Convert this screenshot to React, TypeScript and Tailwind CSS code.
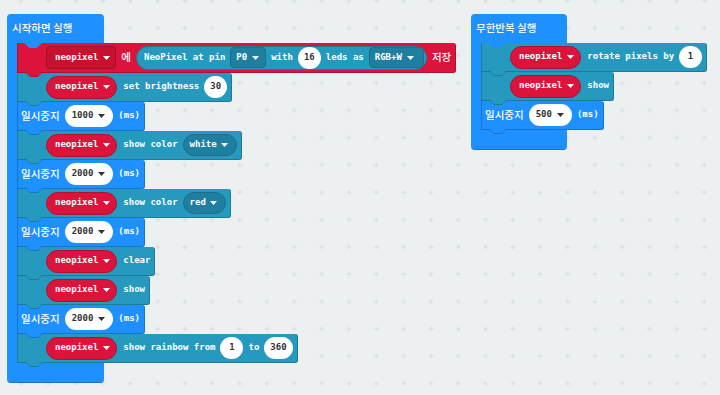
import type { ReactNode } from 'react'

type Kind = 'teal' | 'blue' | 'red'

const KIND: Record<Kind, { cls: string; fill: string; stroke: string }> = {
  teal: { cls: 'bg-[#2699bf] border-[#1e7a99]', fill: '#2699bf', stroke: '#1e7a99' },
  blue: { cls: 'bg-[#1e90ff] border-[#1873cc]', fill: '#1e90ff', stroke: '#1873cc' },
  red: { cls: 'bg-[#dc143c] border-[#b0102f]', fill: '#dc143c', stroke: '#b0102f' },
}

const ko = "font-['Noto_Sans_CJK_KR',sans-serif] text-[10.5px] font-medium leading-none"

function Tab({ fill, stroke, className = 'left-[7px]' }: { fill: string; stroke: string; className?: string }) {
  return (
    <svg
      className={`pointer-events-none absolute -bottom-[5px] z-10 ${className}`}
      width="18"
      height="6"
      viewBox="0 0 18 6"
    >
      <path d="M0 0 L5 5 L13 5 L18 0 Z" fill={fill} />
      <path d="M0 0.5 L5 5.5 L13 5.5 L18 0.5" fill="none" stroke={stroke} strokeWidth="1" />
    </svg>
  )
}

function Arrow({ color = '#fff' }: { color?: string }) {
  return (
    <svg width="7" height="4" viewBox="0 0 7 4" className="shrink-0">
      <path d="M0 0h7L3.5 4z" fill={color} />
    </svg>
  )
}

function Stmt({
  kind,
  children,
  pl = 'pl-[28px]',
  h = 'h-[29px]',
}: {
  kind: Kind
  children: ReactNode
  pl?: string
  h?: string
}) {
  const k = KIND[kind]
  return (
    <div
      className={`relative flex w-fit items-center gap-[5px] rounded-r-[3px] border border-t-0 pr-[4px] ${h} ${pl} ${k.cls}`}
    >
      {children}
      <Tab fill={k.fill} stroke={k.stroke} />
    </div>
  )
}

function VarOval() {
  return (
    <div className="flex h-[23px] items-center gap-[5px] rounded-full border border-[#b0102f] bg-[#dc143c] pr-[6px] pl-[8px]">
      <span>neopixel</span>
      <Arrow />
    </div>
  )
}

function Num({ v }: { v: string }) {
  return (
    <div className="flex h-[22px] min-w-[23px] items-center justify-center rounded-full bg-white px-[6px] text-[#333]">
      {v}
    </div>
  )
}

function WhiteDrop({ v }: { v: string }) {
  return (
    <div className="flex h-[22px] items-center gap-[5px] rounded-full bg-white pr-[8px] pl-[7px] text-[#333]">
      <span>{v}</span>
      <Arrow color="#333" />
    </div>
  )
}

function TealPill({ v }: { v: string }) {
  return (
    <div className="flex h-[22px] items-center gap-[4px] rounded-full border border-[#1a6f8c] bg-[#1f7fa0] pr-[8px] pl-[6px]">
      <span>{v}</span>
      <Arrow />
    </div>
  )
}

function TealRect({ v, pr = 'pr-[6px]' }: { v: string; pr?: string }) {
  return (
    <div className={`flex h-[21px] items-center gap-[5px] rounded-[4px] border border-[#1a6f8c] bg-[#1f7fa0] pl-[5px] ${pr}`}>
      <span>{v}</span>
      <Arrow />
    </div>
  )
}

function Pause({ v }: { v: string }) {
  return (
    <Stmt kind="blue" pl="pl-[3px]">
      <span className={ko}>일시중지</span>
      <WhiteDrop v={v} />
      <span>(ms)</span>
    </Stmt>
  )
}

function Neo({ children }: { children: ReactNode }) {
  return (
    <Stmt kind="teal">
      <VarOval />
      {children}
    </Stmt>
  )
}

function CBlock({ title, w, children }: { title: string; w: string; children: ReactNode }) {
  return (
    <div className="flex flex-col">
      <div className={`relative flex h-[29px] items-center rounded-t-[4px] bg-[#1e90ff] pl-[5px] ${w}`}>
        <span className={ko}>{title}</span>
        <Tab fill="#1e90ff" stroke="#1e90ff" className="left-[17px]" />
      </div>
      <div className="flex">
        <div className="w-[10px] shrink-0 bg-[#1e90ff]" />
        <div className="flex flex-col">{children}</div>
      </div>
      <div className={`h-[20px] rounded-b-[4px] border-b border-[#1873cc] bg-[#1e90ff] ${w}`} />
    </div>
  )
}

function Grid() {
  return (
    <svg className="pointer-events-none absolute inset-0" width="720" height="395">
      <defs>
        <pattern id="g" width="27.33" height="27.33" x="7.33" y="-12.67" patternUnits="userSpaceOnUse">
          <path d="M11.17 13.67h5M13.67 11.17v5" stroke="#d6dbdf" strokeWidth="1" />
        </pattern>
      </defs>
      <rect width="720" height="395" fill="url(#g)" />
    </svg>
  )
}

export default function App() {
  return (
    <div className="relative h-[395px] w-[720px] overflow-hidden bg-[#ecf0f1] font-['DejaVu_Sans_Mono',monospace] text-[9px] font-bold text-white">
      <Grid />

      <div className="absolute top-[14px] left-[7px]">
        <CBlock title="시작하면 실행" w="w-[97px]">
          <Stmt kind="red" h="h-[30px]">
            <div className="flex h-[23px] items-center gap-[5px] rounded-[4px] border border-[#a30e2a] bg-[#c8112f] pr-[5px] pl-[8px]">
              <span>neopixel</span>
              <Arrow />
            </div>
            <span className={ko}>에</span>
            <div className="flex h-[24px] items-center gap-[5px] rounded-full border border-[#1e7a99] bg-[#2699bf] pr-[2px] pl-[7px]">
              <span>NeoPixel at pin</span>
              <TealRect v="P0" />
              <span>with</span>
              <Num v="16" />
              <span>leds as</span>
              <TealRect v="RGB+W" pr="pr-[9px]" />
            </div>
            <span className={ko}>저장</span>
          </Stmt>
          <Neo>
            <span className="ml-[1px]">set brightness</span>
            <Num v="30" />
          </Neo>
          <Pause v="1000" />
          <Neo>
            <span className="ml-[1px]">show color</span>
            <TealPill v="white" />
          </Neo>
          <Pause v="2000" />
          <Neo>
            <span className="ml-[1px]">show color</span>
            <TealPill v="red" />
          </Neo>
          <Pause v="2000" />
          <Neo>
            <span className="ml-[1px]">clear</span>
          </Neo>
          <Neo>
            <span className="ml-[1px]">show</span>
          </Neo>
          <Pause v="2000" />
          <Neo>
            <span className="ml-[1px]">show rainbow from</span>
            <Num v="1" />
            <span>to</span>
            <Num v="360" />
          </Neo>
        </CBlock>
      </div>

      <div className="absolute top-[14px] left-[471px]">
        <CBlock title="무한반복 실행" w="w-[96px]">
          <Neo>
            <span className="ml-[1px]">rotate pixels by</span>
            <Num v="1" />
          </Neo>
          <Neo>
            <span className="ml-[1px]">show</span>
          </Neo>
          <Pause v="500" />
        </CBlock>
      </div>
    </div>
  )
}
